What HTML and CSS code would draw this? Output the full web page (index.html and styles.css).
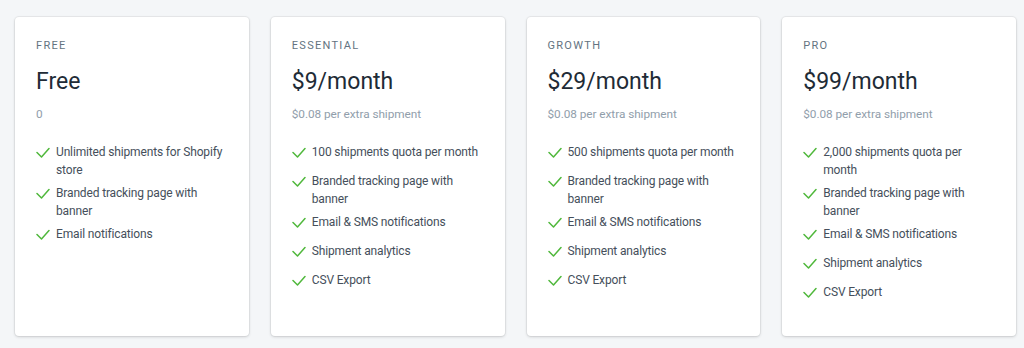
FILE: index.html
```html
<!DOCTYPE html>
<html>
<head>
<meta charset="utf-8">
<link rel="stylesheet" href="styles.css">
</head>
<body>
<div class="plans">
  <div class="card">
    <div class="label">FREE</div>
    <div class="price">Free</div>
    <div class="sub">0</div>
    <ul class="features">
      <li><svg class="check" viewBox="0 0 14 12"><polyline points="1,5.5 5.5,10 13,1.5"/></svg><span>Unlimited shipments for Shopify store</span></li>
      <li><svg class="check" viewBox="0 0 14 12"><polyline points="1,5.5 5.5,10 13,1.5"/></svg><span>Branded tracking page with banner</span></li>
      <li><svg class="check" viewBox="0 0 14 12"><polyline points="1,5.5 5.5,10 13,1.5"/></svg><span>Email notifications</span></li>
    </ul>
  </div>
  <div class="card">
    <div class="label">ESSENTIAL</div>
    <div class="price">$9/month</div>
    <div class="sub">$0.08 per extra shipment</div>
    <ul class="features">
      <li><svg class="check" viewBox="0 0 14 12"><polyline points="1,5.5 5.5,10 13,1.5"/></svg><span>100 shipments quota per month</span></li>
      <li><svg class="check" viewBox="0 0 14 12"><polyline points="1,5.5 5.5,10 13,1.5"/></svg><span>Branded tracking page with banner</span></li>
      <li><svg class="check" viewBox="0 0 14 12"><polyline points="1,5.5 5.5,10 13,1.5"/></svg><span>Email &amp; SMS notifications</span></li>
      <li><svg class="check" viewBox="0 0 14 12"><polyline points="1,5.5 5.5,10 13,1.5"/></svg><span>Shipment analytics</span></li>
      <li><svg class="check" viewBox="0 0 14 12"><polyline points="1,5.5 5.5,10 13,1.5"/></svg><span>CSV Export</span></li>
    </ul>
  </div>
  <div class="card">
    <div class="label">GROWTH</div>
    <div class="price">$29/month</div>
    <div class="sub">$0.08 per extra shipment</div>
    <ul class="features">
      <li><svg class="check" viewBox="0 0 14 12"><polyline points="1,5.5 5.5,10 13,1.5"/></svg><span>500 shipments quota per month</span></li>
      <li><svg class="check" viewBox="0 0 14 12"><polyline points="1,5.5 5.5,10 13,1.5"/></svg><span>Branded tracking page with banner</span></li>
      <li><svg class="check" viewBox="0 0 14 12"><polyline points="1,5.5 5.5,10 13,1.5"/></svg><span>Email &amp; SMS notifications</span></li>
      <li><svg class="check" viewBox="0 0 14 12"><polyline points="1,5.5 5.5,10 13,1.5"/></svg><span>Shipment analytics</span></li>
      <li><svg class="check" viewBox="0 0 14 12"><polyline points="1,5.5 5.5,10 13,1.5"/></svg><span>CSV Export</span></li>
    </ul>
  </div>
  <div class="card">
    <div class="label">PRO</div>
    <div class="price">$99/month</div>
    <div class="sub">$0.08 per extra shipment</div>
    <ul class="features">
      <li><svg class="check" viewBox="0 0 14 12"><polyline points="1,5.5 5.5,10 13,1.5"/></svg><span>2,000 shipments quota per month</span></li>
      <li><svg class="check" viewBox="0 0 14 12"><polyline points="1,5.5 5.5,10 13,1.5"/></svg><span>Branded tracking page with banner</span></li>
      <li><svg class="check" viewBox="0 0 14 12"><polyline points="1,5.5 5.5,10 13,1.5"/></svg><span>Email &amp; SMS notifications</span></li>
      <li><svg class="check" viewBox="0 0 14 12"><polyline points="1,5.5 5.5,10 13,1.5"/></svg><span>Shipment analytics</span></li>
      <li><svg class="check" viewBox="0 0 14 12"><polyline points="1,5.5 5.5,10 13,1.5"/></svg><span>CSV Export</span></li>
    </ul>
  </div>
</div>
</body>
</html>
```
FILE: styles.css
```css
html, body {
  margin: 0;
  padding: 0;
  background: #f4f6f8;
}
body {
  font-family: Roboto, "Liberation Sans", sans-serif;
  color: #212b36;
  padding: 17px 8px 12px 15px;
}
.plans {
  display: grid;
  grid-template-columns: repeat(4, 1fr);
  gap: 22px;
  width: 1001px;
}
.card {
  background: #fff;
  border-radius: 4px;
  box-shadow: 0 0 0 1px rgba(63, 63, 68, 0.06), 0 1px 3px 0 rgba(63, 63, 68, 0.2);
  min-height: 319px;
  box-sizing: border-box;
  padding: 21px 21px 20px;
}
.label {
  font-size: 11px;
  line-height: 16px;
  letter-spacing: 1.3px;
  color: #637381;
}
.price {
  margin-top: 12px;
  font-size: 23px;
  line-height: 32px;
  color: #212b36;
}
.sub {
  margin-top: 8px;
  font-size: 11.8px;
  line-height: 17px;
  letter-spacing: -0.05px;
  color: #919eab;
}
.features {
  list-style: none;
  margin: 21px 0 0;
  padding: 0;
  display: flex;
  flex-direction: column;
  gap: 6px;
}
.features li {
  display: flex;
  min-height: 23px;
  font-size: 12px;
  line-height: 17.5px;
  letter-spacing: -0.15px;
  color: #454f5b;
}
.check {
  width: 14px;
  height: 12px;
  flex: none;
  margin: 3px 6px 0 0;
  fill: none;
  stroke: #50b83c;
  stroke-width: 1.5;
  stroke-linecap: round;
  stroke-linejoin: round;
}
```
